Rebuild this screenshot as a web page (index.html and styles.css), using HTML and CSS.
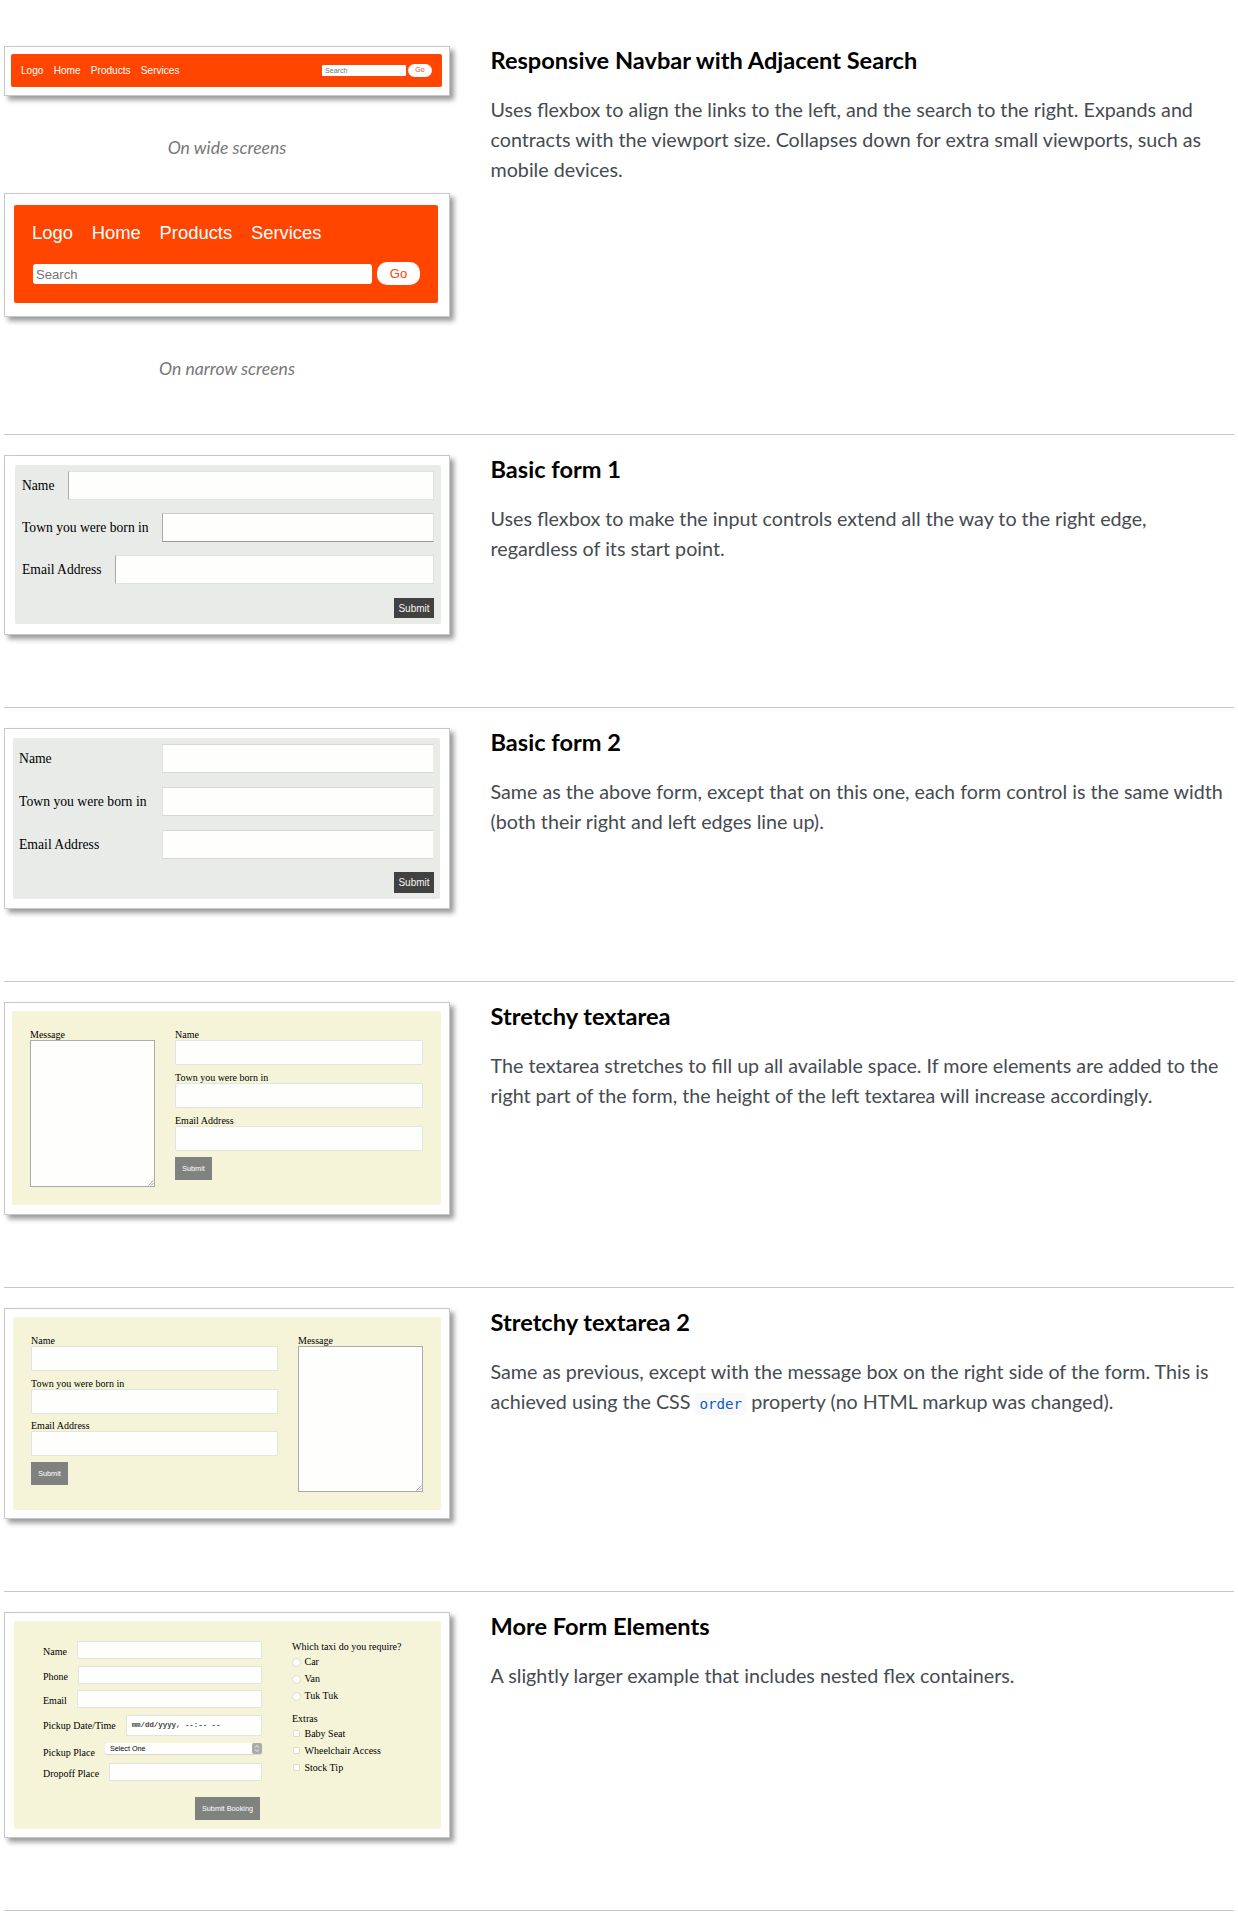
FILE: index.html
```html
<!DOCTYPE html>
<html lang="en">
<head>
<meta charset="utf-8">
<title>Flexbox Form Examples</title>
<link rel="stylesheet" href="styles.css">
</head>
<body>
<main class="examples">
  <section class="example">
    <div class="shots">
      <figure class="shot">
        <div class="frame frame-wide">
          <div class="nav nav-wide">
            <div class="links"><span>Logo</span><span>Home</span><span>Products</span><span>Services</span></div>
            <div class="search"><span class="query">Search</span><span class="go">Go</span></div>
          </div>
        </div>
        <figcaption>On wide screens</figcaption>
      </figure>
      <figure class="shot">
        <div class="frame frame-narrow">
          <div class="nav nav-narrow">
            <div class="links"><span>Logo</span><span>Home</span><span>Products</span><span>Services</span></div>
            <div class="search"><span class="query">Search</span><span class="go">Go</span></div>
          </div>
        </div>
        <figcaption>On narrow screens</figcaption>
      </figure>
    </div>
    <div class="text">
      <h3>Responsive Navbar with Adjacent Search</h3>
      <p>Uses flexbox to align the links to the left, and the search to the right. Expands and contracts with the viewport size. Collapses down for extra small viewports, such as mobile devices.</p>
    </div>
  </section>

  <section class="example">
    <div class="shots">
      <div class="shot">
        <div class="frame frame-basic1">
          <div class="basic">
            <div class="line"><span class="name">Name</span><span class="box"></span></div>
            <div class="line dark"><span class="name">Town you were born in</span><span class="box"></span></div>
            <div class="line"><span class="name">Email Address</span><span class="box"></span></div>
            <span class="submit">Submit</span>
          </div>
        </div>
      </div>
    </div>
    <div class="text">
      <h3>Basic form 1</h3>
      <p>Uses flexbox to make the input controls extend all the way to the right edge, regardless of its start point.</p>
    </div>
  </section>

  <section class="example">
    <div class="shots">
      <div class="shot">
        <div class="frame frame-basic2">
          <div class="basic even">
            <div class="line"><span class="name">Name</span><span class="box"></span></div>
            <div class="line"><span class="name">Town you were born in</span><span class="box"></span></div>
            <div class="line"><span class="name">Email Address</span><span class="box"></span></div>
            <span class="submit">Submit</span>
          </div>
        </div>
      </div>
    </div>
    <div class="text">
      <h3>Basic form 2</h3>
      <p>Same as the above form, except that on this one, each form control is the same width (both their right and left edges line up).</p>
    </div>
  </section>

  <section class="example">
    <div class="shots">
      <div class="shot">
        <div class="frame frame-stretch1">
          <div class="stretch">
            <div class="message"><span>Message</span><div class="area"><svg class="grip" viewBox="0 0 6 6"><path d="M0.5 5.5L5.5 0.5M3 5.5L5.5 3"/></svg></div></div>
            <div class="fields">
              <span>Name</span><div class="box"></div>
              <span>Town you were born in</span><div class="box"></div>
              <span>Email Address</span><div class="box"></div>
              <div class="send">Submit</div>
            </div>
          </div>
        </div>
      </div>
    </div>
    <div class="text">
      <h3>Stretchy textarea</h3>
      <p>The textarea stretches to fill up all available space. If more elements are added to the right part of the form, the height of the left textarea will increase accordingly.</p>
    </div>
  </section>

  <section class="example">
    <div class="shots">
      <div class="shot">
        <div class="frame frame-stretch2">
          <div class="stretch flipped">
            <div class="message"><span>Message</span><div class="area"><svg class="grip" viewBox="0 0 6 6"><path d="M0.5 5.5L5.5 0.5M3 5.5L5.5 3"/></svg></div></div>
            <div class="fields">
              <span>Name</span><div class="box"></div>
              <span>Town you were born in</span><div class="box"></div>
              <span>Email Address</span><div class="box"></div>
              <div class="send">Submit</div>
            </div>
          </div>
        </div>
      </div>
    </div>
    <div class="text">
      <h3>Stretchy textarea 2</h3>
      <p>Same as previous, except with the message box on the right side of the form. This is achieved using the CSS <code>order</code> property (no HTML markup was changed).</p>
    </div>
  </section>

  <section class="example">
    <div class="shots">
      <div class="shot">
        <div class="frame frame-taxi">
          <div class="taxi">
            <div class="booking">
              <div class="entry"><span>Name</span><div class="box"></div></div>
              <div class="entry phone"><span>Phone</span><div class="box"></div></div>
              <div class="entry"><span>Email</span><div class="box"></div></div>
              <div class="entry date"><span>Pickup Date/Time</span><div class="box">mm/dd/yyyy, --:-- --</div></div>
              <div class="entry place"><span>Pickup Place</span><div class="select">Select One<i class="stepper"><svg viewBox="0 0 10 11"><path d="M3 4.5L5 2.5L7 4.5M3 6.5L5 8.5L7 6.5"/></svg></i></div></div>
              <div class="entry drop"><span>Dropoff Place</span><div class="box"></div></div>
              <div class="send">Submit Booking</div>
            </div>
            <div class="options">
              <div class="group">Which taxi do you require?</div>
              <div class="option"><i class="radio"></i>Car</div>
              <div class="option"><i class="radio"></i>Van</div>
              <div class="option"><i class="radio"></i>Tuk Tuk</div>
              <div class="group extras">Extras</div>
              <div class="option"><i class="check"></i>Baby Seat</div>
              <div class="option"><i class="check"></i>Wheelchair Access</div>
              <div class="option"><i class="check"></i>Stock Tip</div>
            </div>
          </div>
        </div>
      </div>
    </div>
    <div class="text">
      <h3>More Form Elements</h3>
      <p>A slightly larger example that includes nested flex containers.</p>
    </div>
  </section>
</main>
</body>
</html>
```
FILE: styles.css
```css
* { box-sizing: border-box; }
body {
  margin: 0;
  background: #fff;
  color: #454b50;
  font: 19.7px/30px Lato, "Open Sans", sans-serif;
}
.examples { padding: 26px 4px 0; }
.example {
  display: grid;
  grid-template-columns: 446px 740px;
  gap: 40.5px;
  padding: 20px 0;
  border-bottom: 1px solid #c8c8c8;
}
.shot { margin: 0; }
div.shot { padding-bottom: 52px; }
.frame {
  display: flex;
  border: 1px solid #c8c8c8;
  background: #fff;
  box-shadow: 4px 4px 5px rgba(0, 0, 0, .4);
}
.frame > * { flex: 1; border-radius: 2px; }
figcaption {
  height: 97px;
  padding-top: 37px;
  text-align: center;
  font-size: 17.6px;
  font-style: italic;
  color: #777;
}
h3 {
  margin: 0;
  padding-bottom: 21px;
  font-size: 23.6px;
  line-height: 28px;
  font-weight: 700;
  color: #000;
}
p { margin: 0; }
code {
  padding: 3px 4px;
  border-radius: 3px;
  background: #f9f9f9;
  color: #0b5cc4;
  font: 14.2px "DejaVu Sans Mono", monospace;
}

/* Navbars */
.frame-wide { height: 50px; padding: 7px 7px 8px 6px; }
.frame-narrow { height: 124px; padding: 11px 11px 13px 9px; }
.nav {
  display: flex;
  background: #ff4500;
  color: #fff;
  font-family: "Liberation Sans", Arial, sans-serif;
}
.links, .search { display: flex; }
.query { background: #fff; color: #757575; }
.go { background: #fff; color: #ff4500; text-align: center; }
.nav-wide { justify-content: space-between; align-items: center; padding: 0 10px; font-size: 10.1px; line-height: 12px; }
.nav-wide .links { gap: 10.2px; }
.nav-wide .search { gap: 2px; align-items: center; font-size: 7.1px; }
.nav-wide .query { width: 84px; height: 11px; padding-left: 3px; border-radius: 1px; }
.nav-wide .go { width: 24px; height: 13px; border-radius: 7px; line-height: 13px; }
.nav-narrow { flex-direction: column; padding: 18px 18px 0; font-size: 18.4px; line-height: 20px; }
.nav-narrow .links { gap: 18.8px; height: 39px; }
.nav-narrow .search { gap: 5px; align-items: center; font-size: 13.1px; }
.nav-narrow .query { flex: 1; height: 20px; padding-left: 3px; border-radius: 3px; line-height: 21px; margin-left: 1px; }
.nav-narrow .go { width: 43px; height: 23px; border-radius: 10px; line-height: 23px; }

/* Basic forms */
.frame-basic1 { height: 180px; padding: 9px 8px 10px 10px; }
.frame-basic2 { height: 181px; padding: 9px 9px 9px 8px; }
.basic {
  display: flex;
  flex-direction: column;
  padding: 6px 7px 0;
  background: #e8ebe8;
  color: #000;
  font: 13.6px/29px "Liberation Serif", "Times New Roman", serif;
}
.basic .line { display: flex; gap: 13.5px; margin-bottom: 13px; }
.basic .box {
  flex: 1;
  height: 29px;
  background: #fefefc;
  border: 1px solid #e0e2e0;
  border-left-color: #aaa;
}
.basic .dark .box { border-top-color: #ccc; border-bottom-color: #999; }
.basic.even { padding: 6px 6px 0; font-size: 13.7px; }
.basic.even .line { margin-bottom: 14px; gap: 0; }
.basic.even .name { width: 143px; }
.basic.even .box { border-color: #d6d8d6 #eee #d6d8d6 #e0e2e0; }
.submit {
  align-self: flex-end;
  width: 40px;
  height: 20px;
  margin-top: 1px;
  background: #414141;
  color: #f4f4f4;
  text-align: center;
  font: 10px/21px "Liberation Sans", Arial, sans-serif;
}
.basic.even .submit { margin-top: -1px; height: 21px; line-height: 22px; }

/* Stretchy textareas */
.frame-stretch1 { height: 213px; padding: 8px 8px 9px 7px; }
.frame-stretch2 { height: 211px; padding: 8px 8px 8px 8px; }
.stretch, .taxi {
  display: flex;
  background: #f5f4d8;
  color: #000;
  font: 10px/12px "Liberation Serif", "Times New Roman", serif;
}
.stretch { gap: 20px; padding: 17px 18px 18px; }
.stretch span { height: 12px; line-height: 13px; }
.flipped .message { order: 2; }
.message { display: flex; flex-direction: column; width: 125px; }
.area {
  flex: 1;
  display: flex;
  align-items: flex-end;
  justify-content: flex-end;
  background: #fefefc;
  border: 1px solid #aaa;
}
.grip { width: 6px; height: 6px; stroke: #888; stroke-width: .7; fill: none; }
.fields { flex: 1; display: flex; flex-direction: column; }
.fields .box { height: 25px; margin-bottom: 6px; }
.flipped .fields .box { margin-bottom: 5.7px; }
.stretch .box, .taxi .box { background: #fefefc; border: 1px solid #e2e4e2; border-radius: 1px; }
.send {
  width: 37px;
  height: 23px;
  background: #80827f;
  color: #fff;
  text-align: center;
  font: 7.3px/24px "Liberation Sans", Arial, sans-serif;
}

/* Taxi booking form */
.frame-taxi { height: 226px; padding: 8px 8px 8px 9px; }
.taxi { padding: 20px 18px 0 29px; gap: 30px; }
.booking { width: 219px; display: flex; flex-direction: column; }
.entry { display: flex; gap: 10px; height: 24.5px; }
.entry .box { flex: 1; height: 18px; }
.entry span { padding-top: 5px; }
.date .box { height: 21px; padding-left: 5px; font: bold 7.4px/18px "Liberation Mono", monospace; color: #444; }
.date { height: 28px; }
.place { height: 20px; }
.place span { padding-top: 4px; }
.select {
  flex: 1;
  display: flex;
  justify-content: space-between;
  height: 11px;
  padding-left: 5px;
  border-radius: 2px;
  background: #fefefc;
  box-shadow: 0 1px 1px #d8d8c8;
  font: 7.2px/11px "Liberation Sans", Arial, sans-serif;
}
.stepper { display: flex; width: 10px; background: #aaa; border-radius: 2px; }
.stepper svg { width: 10px; height: 11px; fill: none; stroke: #fff; stroke-width: .8; }
.booking .send { align-self: flex-end; width: 65px; margin: 9.5px 2px 0 0; }
.options { flex: 1; }
.option { display: flex; align-items: center; gap: 3.5px; height: 17px; }
.group { height: 12.5px; white-space: nowrap; }
.extras { margin-top: 8px; height: 12.5px; }
.radio, .check { width: 9px; height: 9px; background: #fff; border: 1px solid #dcdcd0; border-radius: 50%; }
.check { width: 7px; height: 7px; margin: 0 1px; border-radius: 1px; }
```
